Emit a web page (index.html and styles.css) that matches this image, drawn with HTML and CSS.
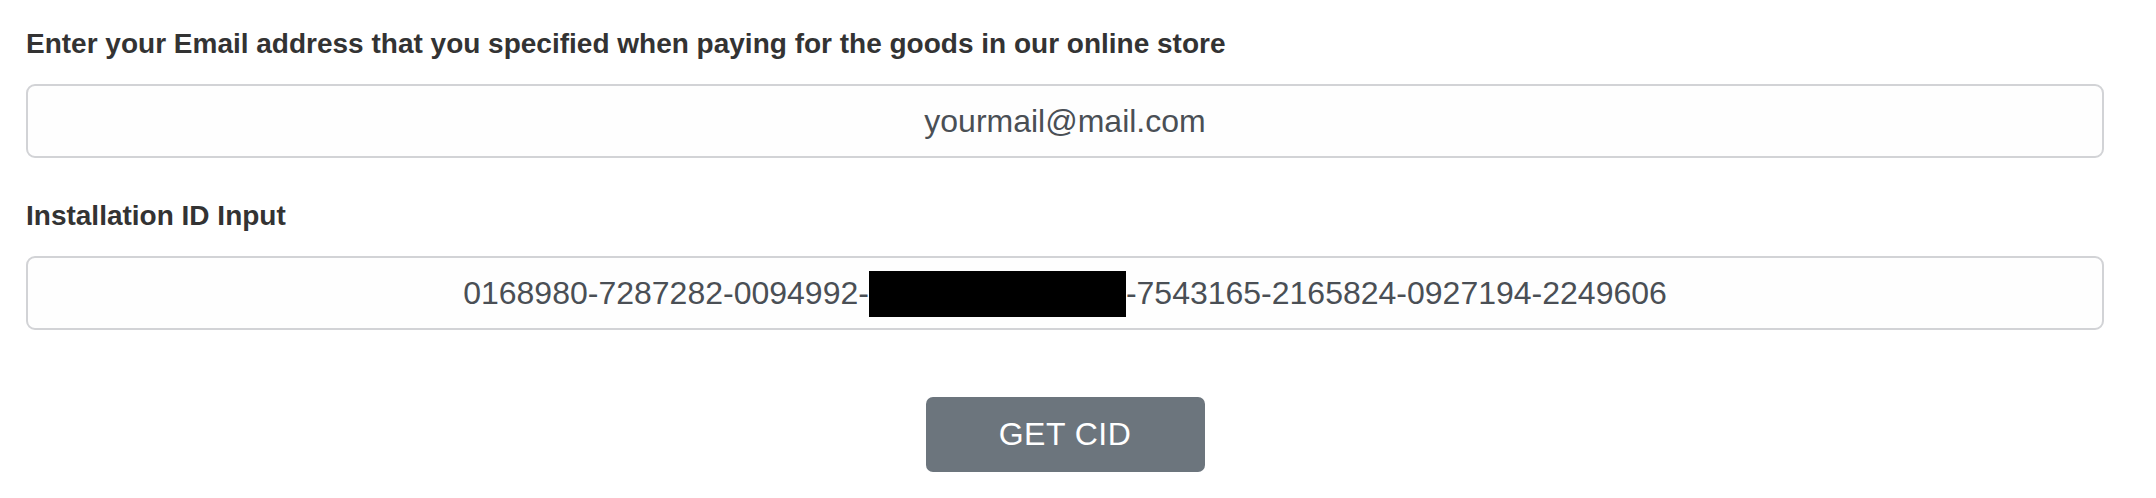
FILE: index.html
```html
<!DOCTYPE html>
<html lang="en">
<head>
<meta charset="utf-8">
<title>Get CID</title>
<link rel="stylesheet" href="styles.css">
</head>
<body>
<form class="cid-form">
  <div class="field">
    <label class="field-label">Enter your Email address that you specified when paying for the goods in our online store</label>
    <div class="field-input">yourmail@mail.com</div>
  </div>
  <div class="field">
    <label class="field-label">Installation ID Input</label>
    <div class="field-input">0168980-7287282-0094992-<span class="redact"></span>-7543165-2165824-0927194-2249606</div>
  </div>
  <div class="actions">
    <button type="button" class="btn">GET CID</button>
  </div>
</form>
</body>
</html>
```
FILE: styles.css
```css
html, body {
  margin: 0;
  padding: 0;
  background: #ffffff;
}
body {
  font-family: "Liberation Sans", Arial, sans-serif;
}
.cid-form {
  padding: 27px 52px 0 26px;
  display: flex;
  flex-direction: column;
}
.field {
  display: flex;
  flex-direction: column;
  gap: 23px;
  margin-bottom: 41px;
}
.field-label {
  font-size: 28px;
  font-weight: 700;
  line-height: 34px;
  color: #333333;
}
.field-input {
  box-sizing: border-box;
  height: 74px;
  border: 2px solid #d2d3d6;
  border-radius: 9px;
  background: #fefefe;
  display: flex;
  align-items: center;
  justify-content: center;
  padding-top: 1px;
  font-size: 32px;
  color: #4a4f55;
  white-space: nowrap;
}
.redact {
  display: inline-block;
  width: 257px;
  height: 46px;
  background: #000000;
}
.actions {
  display: flex;
  justify-content: center;
  margin-top: 26px;
}
.btn {
  box-sizing: border-box;
  width: 279px;
  height: 75px;
  border: none;
  border-radius: 7px;
  background: #6c757d;
  color: #ffffff;
  font-family: "Liberation Sans", Arial, sans-serif;
  font-size: 32px;
  letter-spacing: 0.5px;
}
```
